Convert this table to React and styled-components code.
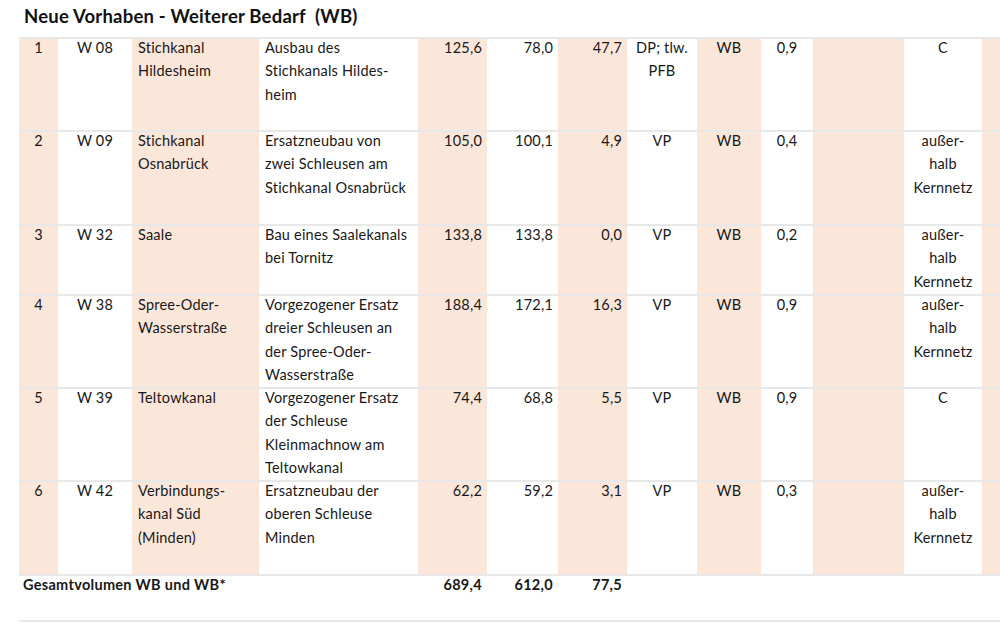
import React from "react";
import styled, { createGlobalStyle } from "styled-components";

const GlobalStyle = createGlobalStyle`
  html, body {
    margin: 0;
    padding: 0;
    background: #fff;
    overflow: hidden;
  }
  body {
    font-family: Lato, "Open Sans", sans-serif;
    color: #181818;
  }
`;

const COLS = "39px 74px 127px 159px 69px 71px 69px 70px 64px 52px 91px 78px 40px";

const Page = styled.div`
  width: 1000px;
  height: 630px;
  padding-left: 19px;
  box-sizing: border-box;
  overflow: hidden;
`;

const Title = styled.h1`
  margin: 0 0 0 5px;
  height: 37px;
  font-size: 18.5px;
  font-weight: 700;
  letter-spacing: 0.2px;
  line-height: 32px;
  white-space: pre;
  color: #111;
`;

const Table = styled.div`
  width: 1022px;
`;

const Row = styled.div`
  display: grid;
  grid-template-columns: ${COLS};
  height: ${(p) => p.$h}px;
  box-sizing: border-box;
  border-top: 2px solid #e8e8e8;
  ${(p) => p.$last && "border-bottom: 2px solid #e8e8e8;"}
`;

const Cell = styled.div`
  background: ${(p) => (p.$shade ? "#fbe7da" : "#fff")};
  text-align: ${(p) => p.$align || "left"};
  padding: 0 ${(p) => (p.$align === "right" ? "5px" : "6px")} 0 ${(p) => (p.$pl ?? 6)}px;
  font-size: 14.5px;
  letter-spacing: ${(p) => (p.$bold ? "0.3px" : "0.2px")};
  line-height: 23.4px;
  font-weight: ${(p) => (p.$bold ? 700 : 400)};
  white-space: nowrap;
  overflow: hidden;
  ${(p) => p.$span && `grid-column: span ${p.$span};`}
`;

const Text = styled.div`
  margin-top: -3px;
`;

const Line = styled.div``;

const rows = [
  {
    nr: "1", code: "W 08", name: ["Stichkanal", "Hildesheim"],
    desc: ["Ausbau des", "Stichkanals Hildes-", "heim"],
    a: "125,6", b: "78,0", c: "47,7", status: ["DP; tlw.", "PFB"],
    cat: "WB", nkv: "0,9", net: ["C"], h: 93,
  },
  {
    nr: "2", code: "W 09", name: ["Stichkanal", "Osnabrück"],
    desc: ["Ersatzneubau von", "zwei Schleusen am", "Stichkanal Osnabrück"],
    a: "105,0", b: "100,1", c: "4,9", status: ["VP"],
    cat: "WB", nkv: "0,4", net: ["außer-", "halb", "Kernnetz"], h: 94,
  },
  {
    nr: "3", code: "W 32", name: ["Saale"],
    desc: ["Bau eines Saalekanals", "bei Tornitz"],
    a: "133,8", b: "133,8", c: "0,0", status: ["VP"],
    cat: "WB", nkv: "0,2", net: ["außer-", "halb", "Kernnetz"], h: 70,
  },
  {
    nr: "4", code: "W 38", name: ["Spree-Oder-", "Wasserstraße"],
    desc: ["Vorgezogener Ersatz", "dreier Schleusen an", "der Spree-Oder-", "Wasserstraße"],
    a: "188,4", b: "172,1", c: "16,3", status: ["VP"],
    cat: "WB", nkv: "0,9", net: ["außer-", "halb", "Kernnetz"], h: 93,
  },
  {
    nr: "5", code: "W 39", name: ["Teltowkanal"],
    desc: ["Vorgezogener Ersatz", "der Schleuse", "Kleinmachnow am", "Teltowkanal"],
    a: "74,4", b: "68,8", c: "5,5", status: ["VP"],
    cat: "WB", nkv: "0,9", net: ["C"], h: 93,
  },
  {
    nr: "6", code: "W 42", name: ["Verbindungs-", "kanal Süd", "(Minden)"],
    desc: ["Ersatzneubau der", "oberen Schleuse", "Minden"],
    a: "62,2", b: "59,2", c: "3,1", status: ["VP"],
    cat: "WB", nkv: "0,3", net: ["außer-", "halb", "Kernnetz"], h: 94,
  },
];

const Lines = ({ items }) => (
  <Text>
    {items.map((t, i) => (
      <Line key={i}>{t}</Line>
    ))}
  </Text>
);

export default function App() {
  return (
    <Page>
      <GlobalStyle />
      <Title>{"Neue Vorhaben - Weiterer Bedarf  (WB)"}</Title>
      <Table>
        {rows.map((r) => (
          <Row key={r.nr} $h={r.h}>
            <Cell $shade $align="center"><Lines items={[r.nr]} /></Cell>
            <Cell $align="center"><Lines items={[r.code]} /></Cell>
            <Cell $shade><Lines items={r.name} /></Cell>
            <Cell><Lines items={r.desc} /></Cell>
            <Cell $shade $align="right"><Lines items={[r.a]} /></Cell>
            <Cell $align="right"><Lines items={[r.b]} /></Cell>
            <Cell $shade $align="right"><Lines items={[r.c]} /></Cell>
            <Cell $align="center"><Lines items={r.status} /></Cell>
            <Cell $shade $align="center"><Lines items={[r.cat]} /></Cell>
            <Cell $align="center"><Lines items={[r.nkv]} /></Cell>
            <Cell $shade />
            <Cell $align="center"><Lines items={r.net} /></Cell>
            <Cell $shade />
          </Row>
        ))}
        <Row $h={48} $last>
          <Cell $span={4} $bold $pl={4}><Lines items={["Gesamtvolumen WB und WB*"]} /></Cell>
          <Cell $align="right" $bold><Lines items={["689,4"]} /></Cell>
          <Cell $align="right" $bold><Lines items={["612,0"]} /></Cell>
          <Cell $align="right" $bold><Lines items={["77,5"]} /></Cell>
          <Cell $span={6} />
        </Row>
      </Table>
    </Page>
  );
}
